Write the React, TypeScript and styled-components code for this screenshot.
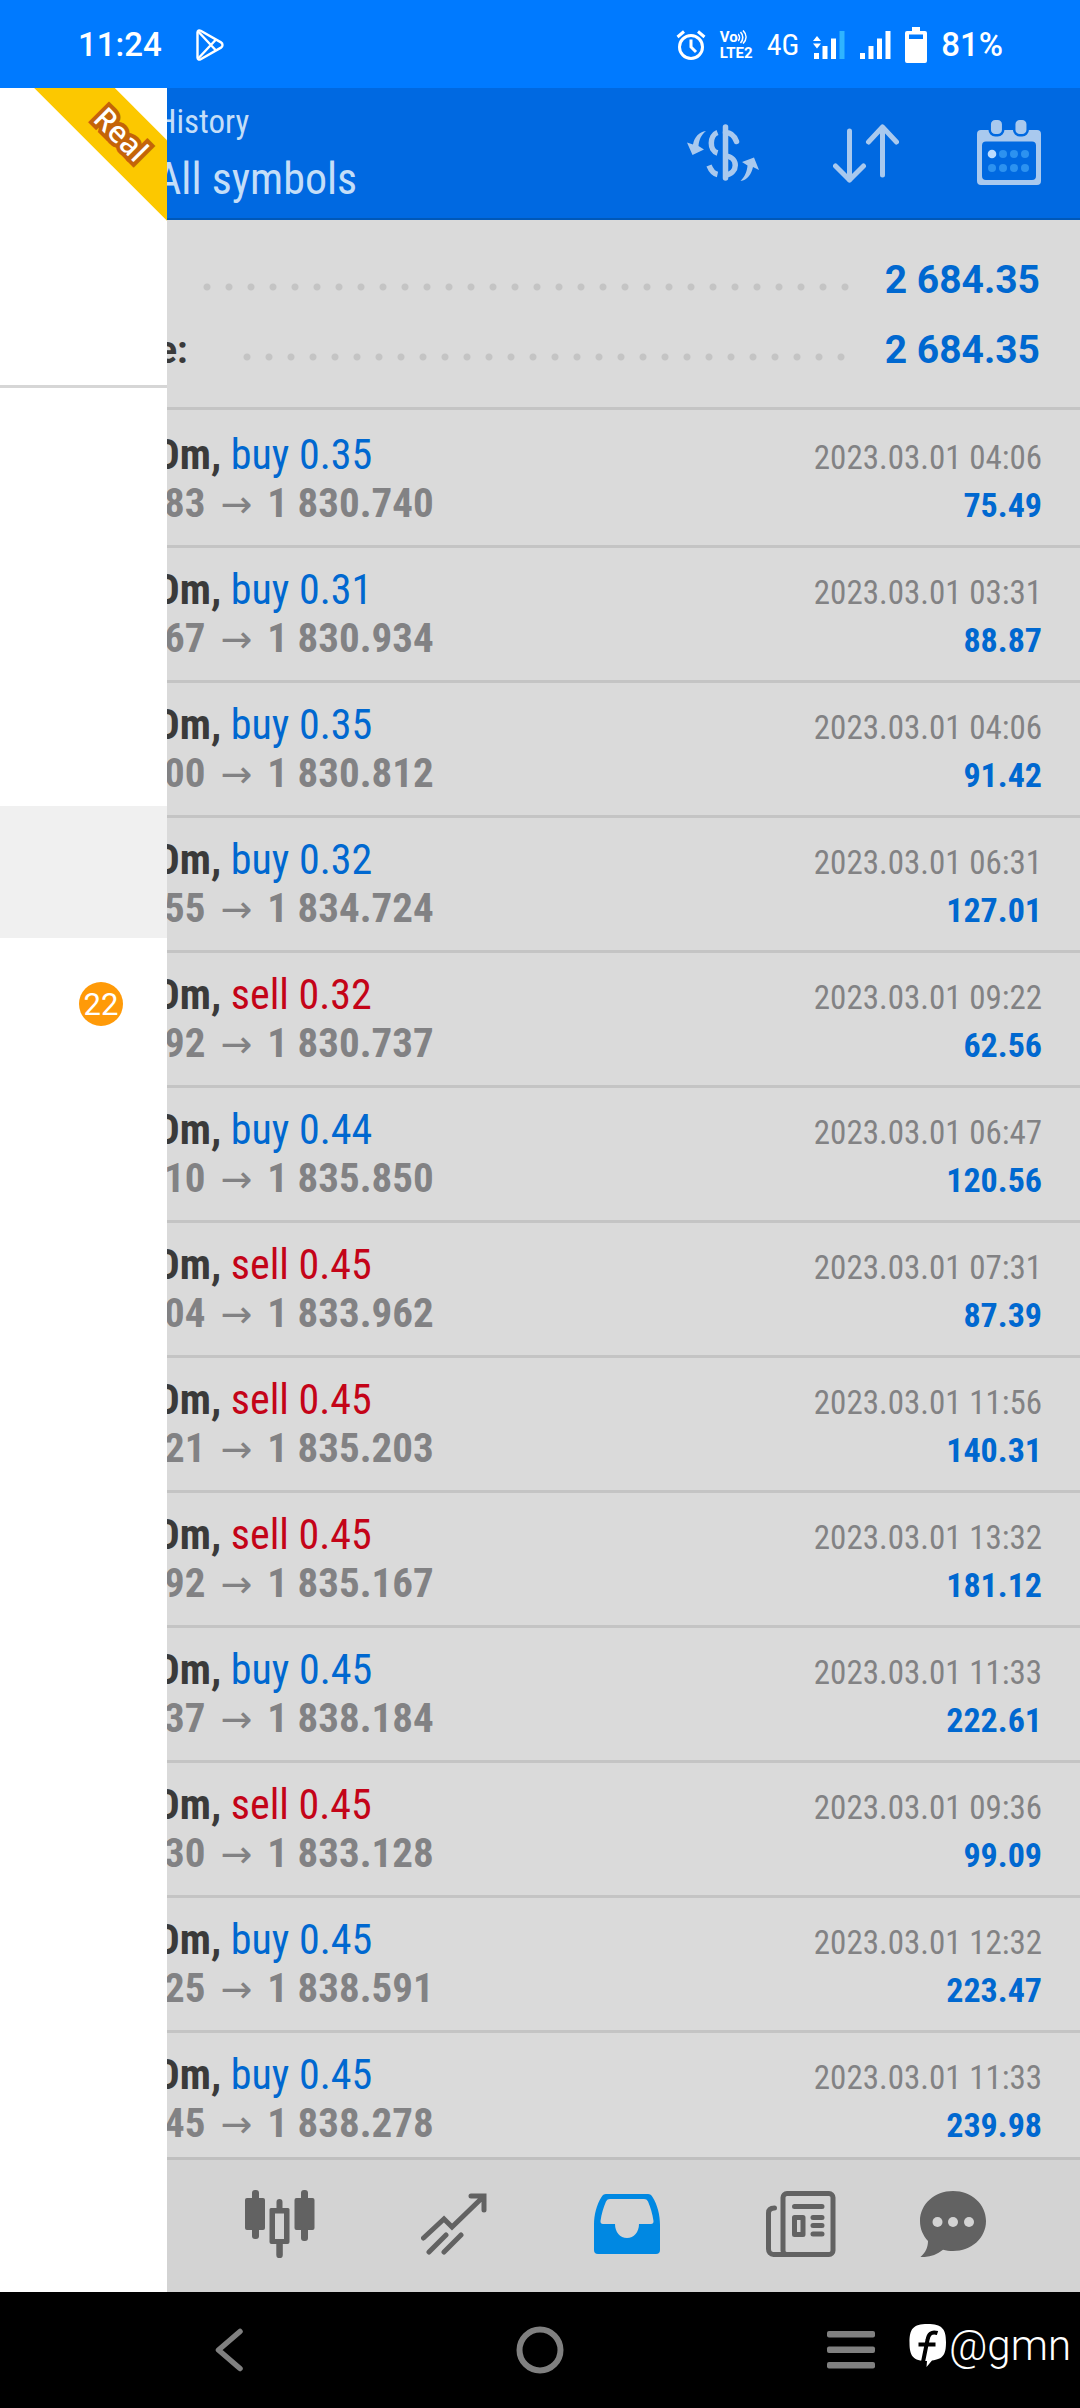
import React from "react";
import styled, { createGlobalStyle } from "styled-components";

const condensed = '"Roboto Condensed", "Liberation Sans Narrow", Roboto, sans-serif';

const GlobalStyle = createGlobalStyle`
  * { box-sizing: border-box; }
  body { margin: 0; background: #000; font-family: Roboto, sans-serif; }
  button { border: 0; padding: 0; background: none; color: inherit; font: inherit; cursor: pointer; }
  svg { display: block; }
`;

const Screen = styled.div`
  display: flex;
  flex-direction: column;
  height: 100vh;
`;

const StatusBar = styled.header`
  display: flex;
  align-items: center;
  justify-content: space-between;
  flex: none;
  height: 88px;
  padding: 2px 77px 0 78px;
  background: #007aff;
  color: #fff;
`;

const StatusGroup = styled.div<{ $gap: number }>`
  display: flex;
  align-items: center;
  gap: ${(p) => p.$gap}px;
`;

const StatusText = styled.span`
  font-size: 33px;
  line-height: 40px;
  font-weight: 500;
`;

const NetworkText = styled.span`
  font-family: ${condensed};
  font-size: 30px;
  line-height: 40px;
`;

const VolteText = styled.span`
  display: flex;
  flex-direction: column;
  font-size: 15px;
  line-height: 16px;
  font-weight: 700;
`;

const VolteTop = styled.span`
  display: flex;
  align-items: center;
`;

const AppArea = styled.div`
  position: relative;
  display: flex;
  flex-direction: column;
  flex: 1;
  min-height: 0;
  background: #dadada;
`;

const TitleBar = styled.div`
  display: flex;
  align-items: center;
  justify-content: space-between;
  flex: none;
  height: 132px;
  padding-left: 156px;
  border-bottom: 2px solid #0058b8;
  background: #0069e1;
  color: #c4def8;
  font-family: ${condensed};
`;

const Titles = styled.div`
  display: flex;
  flex-direction: column;
`;

const Caption = styled.span`
  font-size: 33px;
  line-height: 52px;
`;

const Heading = styled.h1`
  margin: 0;
  font-size: 44px;
  line-height: 62px;
  font-weight: 400;
`;

const Actions = styled.div`
  display: flex;
`;

const ActionButton = styled.button`
  display: grid;
  place-items: center;
  width: 143px;
  height: 130px;
  color: #a9c9ee;
`;

const Summary = styled.section`
  flex: none;
  padding: 25px 40px 22px 0;
  border-bottom: 3px solid #c4c4c4;
`;

const SummaryRow = styled.div`
  display: flex;
  align-items: center;
  height: 70px;
  font-size: 39px;
  line-height: 70px;
  font-weight: 700;
`;

const SummaryLabel = styled.span<{ $width: number }>`
  width: ${(p) => p.$width}px;
  color: #3a3a3a;
  text-align: right;
`;

const Leader = styled.span`
  flex: 1;
  height: 8px;
  margin: 14px 32px 0 48px;
  background: radial-gradient(circle at center, #c4c4c4 3px, transparent 4px) 0 0 / 22px 8px repeat-x;
`;

const SummaryValue = styled.span`
  color: #0068d0;
`;

const Deals = styled.ul`
  flex: 1;
  min-height: 0;
  margin: 0;
  padding: 3px 0 0;
  overflow-y: auto;
  scrollbar-width: none;
  list-style: none;
  font-family: ${condensed};
`;

const Deal = styled.li`
  display: grid;
  grid-template-columns: 1fr auto;
  grid-template-rows: 48px 48px;
  align-items: baseline;
  height: 135px;
  padding: 18px 38px 18px 156px;
  border-bottom: 3px solid #c4c4c4;
  font-size: 42px;
  line-height: 48px;
`;

const Ticker = styled.b`
  color: #3a3a3a;
`;

const Side = styled.span<{ $sell: boolean }>`
  color: ${(p) => (p.$sell ? "#c40418" : "#0068d0")};
`;

const Prices = styled.span`
  display: flex;
  align-items: baseline;
  gap: 15px;
  padding-left: 8px;
  color: #828284;
  font-size: 41px;
  font-weight: 700;
`;

const Arrow = styled.span`
  font-family: "DejaVu Sans", sans-serif;
  font-size: 38px;
  line-height: 40px;
  font-weight: 400;
`;

const DealTime = styled.time`
  color: #828284;
  font-size: 33px;
  line-height: 40px;
`;

const Profit = styled.span`
  color: #0068d0;
  font-size: 34px;
  line-height: 40px;
  font-weight: 700;
  text-align: right;
`;

const TabBar = styled.nav`
  display: grid;
  grid-template-columns: repeat(4, 4fr) 3fr;
  flex: none;
  height: 135px;
  padding: 0 62px 4px 193px;
  border-top: 3px solid #bfbfbf;
  background: #d3d3d3;
`;

const TabButton = styled.button<{ $active?: boolean }>`
  display: grid;
  place-items: center;
  color: ${(p) => (p.$active ? "#0088e2" : "#626262")};
`;

const Drawer = styled.aside`
  position: absolute;
  inset: 0 auto 0 0;
  width: 167px;
  overflow: hidden;
  background: #fff;
`;

const DrawerHead = styled.div`
  height: 300px;
  border-bottom: 3px solid #d6d6d6;
`;

const Ribbon = styled.div`
  position: absolute;
  top: 18px;
  left: -9px;
  width: 260px;
  height: 57px;
  background: #fcc800;
  color: #fff;
  font-family: "Noto Sans", sans-serif;
  font-size: 30px;
  line-height: 55px;
  font-weight: 500;
  text-align: center;
  -webkit-text-stroke: 8px #c46408;
  paint-order: stroke fill;
  transform: rotate(45deg);
`;

const DrawerList = styled.div`
  padding-top: 22px;
`;

const DrawerItem = styled.button<{ $selected?: boolean }>`
  display: flex;
  align-items: center;
  justify-content: flex-end;
  width: 100%;
  height: 132px;
  padding-right: 44px;
  background: ${(p) => (p.$selected ? "#f0f0f0" : "#fff")};
`;

const Badge = styled.span`
  width: 44px;
  height: 44px;
  border-radius: 50%;
  background: #ff9a08;
  color: #fff;
  font-size: 31px;
  line-height: 46px;
  font-weight: 400;
  text-align: center;
`;

const SystemBar = styled.footer`
  position: relative;
  display: grid;
  grid-template-columns: repeat(3, 1fr);
  flex: none;
  height: 116px;
  padding: 0 74px;
  background: #000;
`;

const SystemButton = styled.button`
  display: grid;
  place-items: center;
  color: #808080;
`;

const Watermark = styled.div`
  position: absolute;
  top: 28px;
  right: 9px;
  display: flex;
  align-items: center;
  gap: 2px;
  color: #fff;
  font-size: 42px;
  line-height: 52px;
  font-weight: 300;
`;

const PlayIcon = () => (
  <svg width="28" height="32" viewBox="0 0 28 32" fill="none" stroke="currentColor" strokeWidth="2.4" strokeLinejoin="round">
    <path d="M1.5 3.5C1.5 1.6 3 .9 4.7 1.8L25 13.4c2 1.2 2 4 0 5.200L4.700 30.200C3 31.100 1.500 30.400 1.500 28.500z" />
    <path d="M2.200 2.500 20 21.500M2.200 29.500 20 10.500" />
  </svg>
);

const AlarmIcon = () => (
  <svg width="30" height="30" viewBox="0 0 30 30" fill="none" stroke="currentColor" strokeWidth="3">
    <circle cx="15" cy="17" r="11.500" />
    <path d="M15 9.500V17l5 5M1.500 7 8 1.500M28.500 7 22 1.500" />
  </svg>
);

const WavesIcon = () => (
  <svg width="9" height="14" viewBox="0 0 9 14" fill="none" stroke="currentColor" strokeWidth="1.600">
    <path d="M0 4c2 2 2 5 0 7M2.500 2c3 3 3 8 0 11M5 .5c4 4 4 9 0 13" />
  </svg>
);

const SignalIcon = ({ data }: { data?: boolean }) => (
  <svg width="32" height="28" viewBox="0 0 32 28" fill="currentColor">
    <rect x="1" y="22" width="5" height="6" />
    <rect x="9.500" y="15" width="5" height="13" />
    <rect x="18" y="7.500" width="5" height="20.500" />
    <rect x="26.500" y="0" width="5" height="28" fill={data ? "#2fb4ff" : "currentColor"} />
    {data && <path d="M0 10 4 5l4 5zM0 12.500h8l-4 5z" />}
  </svg>
);

const BatteryIcon = () => (
  <svg width="22" height="36" viewBox="0 0 22 36">
    <path fill="#fff" d="M7 0h8v4h5a2 2 0 0 1 2 2v28a2 2 0 0 1-2 2H2a2 2 0 0 1-2-2V6a2 2 0 0 1 2-2h5z" />
    <rect x="4" y="7.500" width="14" height="4.500" fill="#007aff" />
  </svg>
);

const DollarIcon = () => (
  <svg width="72" height="58" viewBox="0 0 72 58" fill="none" stroke="currentColor" strokeWidth="5.500">
    <path strokeLinecap="round" d="M38.500 3v51" />
    <path d="M38.500 8.500c6 0 9 3.500 11 9" strokeLinecap="round" />
    <path d="M30.500 8.500c-8 3-8.500 18 0 20.500M38.500 32c13 1 13 17 0 19M30.500 50.500c-4.500-1-6.500-4-8.500-9" />
    <path fill="currentColor" stroke="none" d="M19 7C12 8 7.500 13 6 20.500L0 18.500 5.500 31 17 25.500 11.500 22C12 16 14 11 19 7zM53.500 57c7-1 11-7 12.500-14l6 3-5-12.500-12 4.500 5.500 3.500c-.5 6-2.500 11-7 15.500z" />
  </svg>
);

const SortIcon = () => (
  <svg width="66" height="60" viewBox="0 0 66 60" fill="none" stroke="currentColor" strokeWidth="5" strokeLinecap="round" strokeLinejoin="round">
    <path d="M16.500 8v49M2.500 43l14 14 14-14M49.500 52V4M35.500 19l14-15 14 15" />
  </svg>
);

const CalendarIcon = () => (
  <svg width="64" height="66" viewBox="0 0 64 66">
    <path fill="currentColor" fillRule="evenodd" d="M4 10h56a4 4 0 0 1 4 4v47a4 4 0 0 1-4 4H4a4 4 0 0 1-4-4V14a4 4 0 0 1 4-4zm5 11.500a4 4 0 0 0-4 4V56a4 4 0 0 0 4 4h46a4 4 0 0 0 4-4V25.500a4 4 0 0 0-4-4z" />
    <g fill="currentColor" stroke="#0069e1" strokeWidth="2.500">
      <rect x="12.700" y="-1.200" width="13.500" height="16.500" rx="5.500" />
      <rect x="37.200" y="-1.200" width="13.500" height="16.500" rx="5.500" />
    </g>
    <circle cx="15" cy="34" r="4.300" fill="#bcdcff" />
    {[26, 37, 48].map((x) => <circle key={x} cx={x} cy="34" r="4" fill="#2c92f0" />)}
    {[15, 26, 37, 48].map((x) => <circle key={x} cx={x} cy="48" r="4" fill="#2c92f0" />)}
  </svg>
);

const CandlesIcon = () => (
  <svg width="70" height="68" viewBox="0 0 70 68" fill="currentColor">
    <rect x="7" y="0" width="7" height="49" rx="3" />
    <rect x="0" y="8" width="20" height="32" rx="2" />
    <rect x="56" y="0" width="7" height="51" rx="3" />
    <rect x="49.500" y="8" width="20" height="32" rx="2" />
    <path d="M31.500 18v-6a3 3 0 0 1 6 0v6H43a1.500 1.500 0 0 1 1.500 1.500V52a2 2 0 0 1-2 2h-4.700v11a3 3 0 0 1-6.500 0V54h-4.800a2 2 0 0 1-2-2V19.500A1.500 1.500 0 0 1 26 18zM30 23.500V49h9V23.500z" fillRule="evenodd" />
  </svg>
);

const TrendIcon = () => (
  <svg width="66" height="62" viewBox="0 0 66 62" fill="none" stroke="currentColor" strokeWidth="5">
    <path d="M2.500 45 23 26l8 8L62 4M50 3h13v14M8 59l17-17M23 59l17-17" strokeLinecap="round" strokeLinejoin="miter" />
  </svg>
);

const InboxIcon = () => (
  <svg width="68" height="62" viewBox="0 0 68 62" fill="currentColor" fillRule="evenodd">
    <path d="M13 1h42c2 0 3.500 1 4.500 3 5 8 7.500 18 7.500 28v25a4 4 0 0 1-4 4H5a4 4 0 0 1-4-4V32C1 22 3.500 12 8.500 4c1-2 2.500-3 4.500-3zM17 6c-2 0-3 .8-4 2.500C10.500 14 8.500 21 7.500 28c-.2 2 .8 3 2.500 3h12c0 8 5 14 12 14s12-6 12-14h12c1.700 0 2.700-1 2.500-3-1-7-3-14-5.500-19.500-1-1.700-2-2.500-4-2.500z" />
  </svg>
);

const NewsIcon = () => (
  <svg width="70" height="66" viewBox="0 0 70 66" fill="none" stroke="currentColor" strokeWidth="5" strokeLinecap="round" strokeLinejoin="round">
    <rect x="17" y="2.500" width="50" height="61" rx="4" />
    <path d="M8.500 17c-4 0-6 2-6 5v36c0 3 2 5.500 5 5.500h14M28.500 15.500H56M47 26.500h9M47 34.500h9M47 43h9" />
    <rect x="28.500" y="26.500" width="8.500" height="17" />
  </svg>
);

const ChatIcon = () => (
  <svg width="66" height="66" viewBox="0 0 66 66">
    <path fill="currentColor" d="M33 0c18.500 0 33 13 33 30S51.500 60 33 60c-3.500 0-7-.5-10-1.300C16 64 9 66.500.5 66 5.500 61.500 8 56.500 8 50 3 44.500 0 38 0 30 0 13 14.500 0 33 0z" />
    {[17.500, 33, 49].map((x) => <circle key={x} cx={x} cy="31" r="5" fill="#d3d3d3" />)}
  </svg>
);

const BackIcon = () => (
  <svg width="28" height="44" viewBox="0 0 28 44" fill="none" stroke="currentColor" strokeWidth="5.500" strokeLinecap="round" strokeLinejoin="round">
    <path d="M25 3.500 3.500 22 25 40.500" />
  </svg>
);

const HomeIcon = () => (
  <svg width="48" height="48" viewBox="0 0 48 48" fill="none" stroke="currentColor" strokeWidth="6">
    <circle cx="24" cy="24" r="20.500" />
  </svg>
);

const RecentsIcon = () => (
  <svg width="50" height="40" viewBox="0 0 50 40" fill="currentColor">
    {[1, 16.500, 32].map((y) => <rect key={y} x="1" y={y} width="48" height="6.500" rx="2" />)}
  </svg>
);

const BrandIcon = () => (
  <svg width="38" height="44" viewBox="0 0 38 44">
    <path fill="#fff" d="M18.500 0C33 0 37 5 37 18s-3 17-14 18.500L17.500 43l.5-6C4 37 .5 32 .5 18.500S4 0 18.500 0z" />
    <path fill="none" stroke="#000" strokeWidth="4" d="M28.500 9c-6-2-9 1-10 7L14 38M9.500 20.500h17" />
  </svg>
);

type Row = { open: string; close: string; side: "buy" | "sell"; lots: string; time: string; profit: string };

const deals: Row[] = [
  { open: "83", close: "1 830.740", side: "buy", lots: "0.35", time: "04:06", profit: "75.49" },
  { open: "67", close: "1 830.934", side: "buy", lots: "0.31", time: "03:31", profit: "88.87" },
  { open: "00", close: "1 830.812", side: "buy", lots: "0.35", time: "04:06", profit: "91.42" },
  { open: "55", close: "1 834.724", side: "buy", lots: "0.32", time: "06:31", profit: "127.01" },
  { open: "92", close: "1 830.737", side: "sell", lots: "0.32", time: "09:22", profit: "62.56" },
  { open: "10", close: "1 835.850", side: "buy", lots: "0.44", time: "06:47", profit: "120.56" },
  { open: "04", close: "1 833.962", side: "sell", lots: "0.45", time: "07:31", profit: "87.39" },
  { open: "21", close: "1 835.203", side: "sell", lots: "0.45", time: "11:56", profit: "140.31" },
  { open: "92", close: "1 835.167", side: "sell", lots: "0.45", time: "13:32", profit: "181.12" },
  { open: "37", close: "1 838.184", side: "buy", lots: "0.45", time: "11:33", profit: "222.61" },
  { open: "30", close: "1 833.128", side: "sell", lots: "0.45", time: "09:36", profit: "99.09" },
  { open: "25", close: "1 838.591", side: "buy", lots: "0.45", time: "12:32", profit: "223.47" },
  { open: "45", close: "1 838.278", side: "buy", lots: "0.45", time: "11:33", profit: "239.98" },
];

export default function App() {
  return (
    <Screen>
      <GlobalStyle />
      <StatusBar>
        <StatusGroup $gap={34}>
          <StatusText>11:24</StatusText>
          <PlayIcon />
        </StatusGroup>
        <StatusGroup $gap={14}>
          <AlarmIcon />
          <VolteText>
            <VolteTop>Vo<WavesIcon /></VolteTop>
            <span>LTE2</span>
          </VolteText>
          <NetworkText>4G</NetworkText>
          <SignalIcon data />
          <SignalIcon />
          <BatteryIcon />
          <StatusText>81%</StatusText>
        </StatusGroup>
      </StatusBar>

      <AppArea>
        <TitleBar>
          <Titles>
            <Caption>History</Caption>
            <Heading>All symbols</Heading>
          </Titles>
          <Actions>
            <ActionButton aria-label="Symbols"><DollarIcon /></ActionButton>
            <ActionButton aria-label="Sort"><SortIcon /></ActionButton>
            <ActionButton aria-label="Period"><CalendarIcon /></ActionButton>
          </Actions>
        </TitleBar>

        <Summary>
          <SummaryRow>
            <SummaryLabel $width={148} />
            <Leader />
            <SummaryValue>2 684.35</SummaryValue>
          </SummaryRow>
          <SummaryRow>
            <SummaryLabel $width={188}>e:</SummaryLabel>
            <Leader />
            <SummaryValue>2 684.35</SummaryValue>
          </SummaryRow>
        </Summary>

        <Deals>
          {deals.map((d, i) => (
            <Deal key={i}>
              <span>
                <Ticker>Dm,</Ticker> <Side $sell={d.side === "sell"}>{d.side} {d.lots}</Side>
              </span>
              <DealTime>2023.03.01 {d.time}</DealTime>
              <Prices>
                <span>{d.open}</span>
                <Arrow>→</Arrow>
                <span>{d.close}</span>
              </Prices>
              <Profit>{d.profit}</Profit>
            </Deal>
          ))}
        </Deals>

        <TabBar>
          <TabButton aria-label="Charts"><CandlesIcon /></TabButton>
          <TabButton aria-label="Trade"><TrendIcon /></TabButton>
          <TabButton aria-label="History" $active><InboxIcon /></TabButton>
          <TabButton aria-label="News"><NewsIcon /></TabButton>
          <TabButton aria-label="Messages"><ChatIcon /></TabButton>
        </TabBar>

        <Drawer>
          <DrawerHead />
          <Ribbon>Real</Ribbon>
          <DrawerList>
            <DrawerItem aria-label="Quotes" />
            <DrawerItem aria-label="Charts" />
            <DrawerItem aria-label="Trade" />
            <DrawerItem aria-label="History" $selected />
            <DrawerItem><Badge>22</Badge></DrawerItem>
          </DrawerList>
        </Drawer>
      </AppArea>

      <SystemBar>
        <SystemButton aria-label="Back"><BackIcon /></SystemButton>
        <SystemButton aria-label="Home"><HomeIcon /></SystemButton>
        <SystemButton aria-label="Recents"><RecentsIcon /></SystemButton>
        <Watermark>
          <BrandIcon />
          <span>@gmn</span>
        </Watermark>
      </SystemBar>
    </Screen>
  );
}
